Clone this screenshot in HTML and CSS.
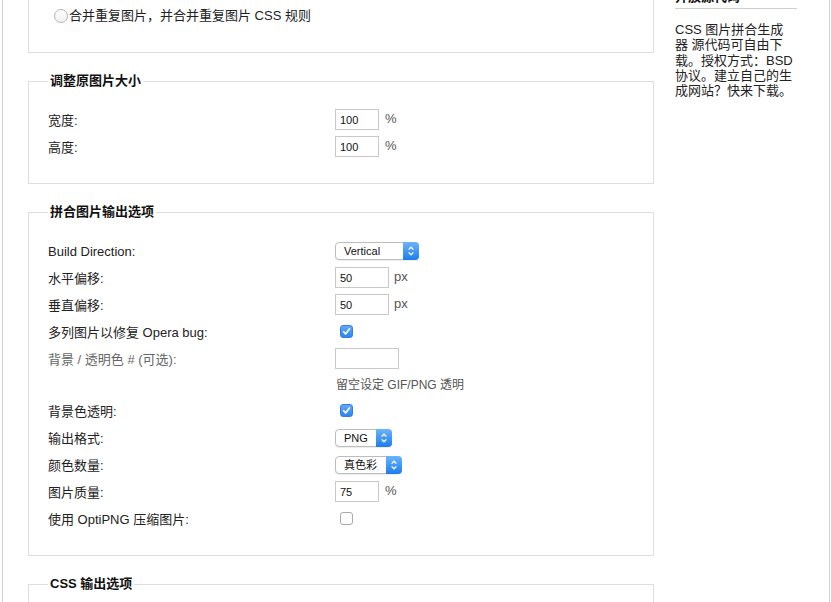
FILE: index.html
```html
<!DOCTYPE html>
<html lang="zh-CN">
<head>
  <meta charset="UTF-8">
  <title>CSS 图片拼合生成器</title>
  <link rel="stylesheet" href="styles.css">
</head>
<body>

<div class="page">
  <div class="main">

    <fieldset class="box">
      <legend>重复图片</legend>
      <div class="row"><label class="opt"><span class="radio"></span>忽略重复图片</label></div>
      <div class="row"><label class="opt"><span class="radio"></span>合并重复图片，并合并重复图片 CSS 规则</label></div>
    </fieldset>

    <fieldset class="box">
      <legend>调整原图片大小</legend>
      <div class="row">
        <label class="name">宽度:</label>
        <input class="text num" type="text" value="100"><span class="unit">%</span>
      </div>
      <div class="row">
        <label class="name">高度:</label>
        <input class="text num" type="text" value="100"><span class="unit">%</span>
      </div>
    </fieldset>

    <fieldset class="box">
      <legend>拼合图片输出选项</legend>
      <div class="row">
        <label class="name">Build Direction:</label>
        <span class="select dir"><span class="val">Vertical</span><span class="arrow"><svg width="8" height="12" viewBox="0 0 8 12"><path d="M1.6 4.6L4 2.2l2.4 2.4M1.6 7.4L4 9.8l2.4-2.4" fill="none" stroke="#fff" stroke-width="1.3"/></svg></span></span>
      </div>
      <div class="row">
        <label class="name">水平偏移:</label>
        <input class="text off" type="text" value="50"><span class="unit px">px</span>
      </div>
      <div class="row">
        <label class="name">垂直偏移:</label>
        <input class="text off" type="text" value="50"><span class="unit px">px</span>
      </div>
      <div class="row">
        <label class="name">多列图片以修复 Opera bug:</label>
        <span class="check on"><svg width="11" height="11" viewBox="0 0 11 11"><path d="M2.6 5.8l2 2.1 3.8-5" fill="none" stroke="#fff" stroke-width="1.6" stroke-linecap="round" stroke-linejoin="round"/></svg></span>
      </div>
      <div class="row">
        <label class="name muted">背景 / 透明色 # (可选):</label>
        <input class="text color" type="text" value="">
      </div>
      <div class="row short">
        <span class="hint">留空设定 GIF/PNG 透明</span>
      </div>
      <div class="row">
        <label class="name">背景色透明:</label>
        <span class="check on"><svg width="11" height="11" viewBox="0 0 11 11"><path d="M2.6 5.8l2 2.1 3.8-5" fill="none" stroke="#fff" stroke-width="1.6" stroke-linecap="round" stroke-linejoin="round"/></svg></span>
      </div>
      <div class="row">
        <label class="name">输出格式:</label>
        <span class="select fmt"><span class="val">PNG</span><span class="arrow"><svg width="8" height="12" viewBox="0 0 8 12"><path d="M1.6 4.6L4 2.2l2.4 2.4M1.6 7.4L4 9.8l2.4-2.4" fill="none" stroke="#fff" stroke-width="1.3"/></svg></span></span>
      </div>
      <div class="row">
        <label class="name">颜色数量:</label>
        <span class="select colors"><span class="val">真色彩</span><span class="arrow"><svg width="8" height="12" viewBox="0 0 8 12"><path d="M1.6 4.6L4 2.2l2.4 2.4M1.6 7.4L4 9.8l2.4-2.4" fill="none" stroke="#fff" stroke-width="1.3"/></svg></span></span>
      </div>
      <div class="row">
        <label class="name">图片质量:</label>
        <input class="text num" type="text" value="75"><span class="unit">%</span>
      </div>
      <div class="row">
        <label class="name">使用 OptiPNG 压缩图片:</label>
        <span class="check"></span>
      </div>
    </fieldset>

    <fieldset class="box">
      <legend>CSS 输出选项</legend>
      <div class="row">
        <label class="name">CSS 类名前缀:</label>
        <input class="text off" type="text" value="">
      </div>
      <div class="row">
        <label class="name">CSS 后缀:</label>
        <input class="text off" type="text" value="">
      </div>
    </fieldset>

  </div>

  <div class="side">
    <h3>开放源代码</h3>
    <p>CSS 图片拼合生成器 源代码可自由下载。授权方式：BSD 协议。建立自己的生成网站？快来下载。</p>
  </div>
</div>

</body>
</html>
```

FILE: styles.css
```css
body {
  margin: 0;
  font-family: "Liberation Sans", "Noto Sans CJK SC", sans-serif;
  font-size: 13px;
  color: #222;
  background: #fff;
}
.page {
  display: flex;
  width: 828px;
  min-height: 720px;
  margin: -58px 0 0 2px;
  box-sizing: border-box;
  border-left: 1px solid #cfcfcf;
  border-right: 1px solid #cfcfcf;
}
.main {
  width: 651px;
  flex-shrink: 0;
  padding-left: 25px;
  box-sizing: border-box;
}
.box {
  width: 626px;
  min-width: 0;
  box-sizing: border-box;
  margin: 0 0 20px;
  padding: 17px 19px 23px;
  border: 1px solid #dedede;
}
.box legend {
  padding: 0 2px;
  font-weight: bold;
  line-height: 16px;
  color: #111;
}
.row {
  display: flex;
  align-items: center;
  height: 27px;
}
.row.short {
  height: 25px;
}
.row .name {
  width: 287px;
  flex-shrink: 0;
  line-height: 16px;
  padding-top: 2px;
}
.muted {
  color: #666;
}
.opt {
  display: flex;
  align-items: center;
  line-height: 16px;
}
.radio {
  width: 14px;
  height: 14px;
  margin: 0 1px 0 6px;
  box-sizing: border-box;
  border: 1px solid #b4b4b4;
  border-radius: 50%;
  background: linear-gradient(#fff, #f1f1f1);
}
.text {
  height: 21px;
  margin: 0;
  padding: 1px 4px 0;
  box-sizing: border-box;
  border: 1px solid #c9c9c9;
  font-family: "Liberation Sans", sans-serif;
  font-size: 11px;
  color: #111;
  outline: none;
}
.text.num {
  width: 44px;
}
.text.off {
  width: 54px;
}
.text.color {
  width: 64px;
}
.unit {
  margin: -3px 0 0 6px;
  color: #555;
}
.unit.px {
  margin-left: 5px;
}
.check {
  display: flex;
  align-items: center;
  justify-content: center;
  width: 13px;
  height: 13px;
  margin: 0 0 0 5px;
  box-sizing: border-box;
  border: 1px solid #a9a9a9;
  border-radius: 3px;
  background: #fff;
}
.check.on {
  border-color: #2f7fe6;
  background: linear-gradient(#62a9f6, #2e84ee);
}
.hint {
  margin-left: 288px;
  font-size: 12px;
  line-height: 16px;
  color: #555;
}
.select {
  display: inline-flex;
  height: 18px;
  box-sizing: border-box;
  border: 1px solid #bdbdbd;
  border-radius: 4px;
  background: #fff;
  box-shadow: 0 1px 1px rgba(0,0,0,0.08);
  font-size: 11px;
  color: #111;
}
.select.dir {
  width: 84px;
}
.select.fmt {
  width: 57px;
}
.select.colors {
  width: 67px;
}
.select .val {
  flex: 1;
  padding-left: 8px;
  line-height: 16px;
}
.select .arrow {
  display: flex;
  align-items: center;
  justify-content: center;
  width: 16px;
  margin: -1px -1px -1px 0;
  border-radius: 0 4px 4px 0;
  background: linear-gradient(#6cb4f9, #1d7cef);
}
.side {
  flex: 1;
  padding: 47px 32px 0 21px;
}
.side h3 {
  margin: 0;
  padding-bottom: 3px;
  font-size: 13px;
  line-height: 16px;
  color: #111;
  border-bottom: 1px solid #cfcfcf;
}
.side p {
  margin: 13px 2px 0 0;
  line-height: 15.25px;
  color: #222;
}
```
